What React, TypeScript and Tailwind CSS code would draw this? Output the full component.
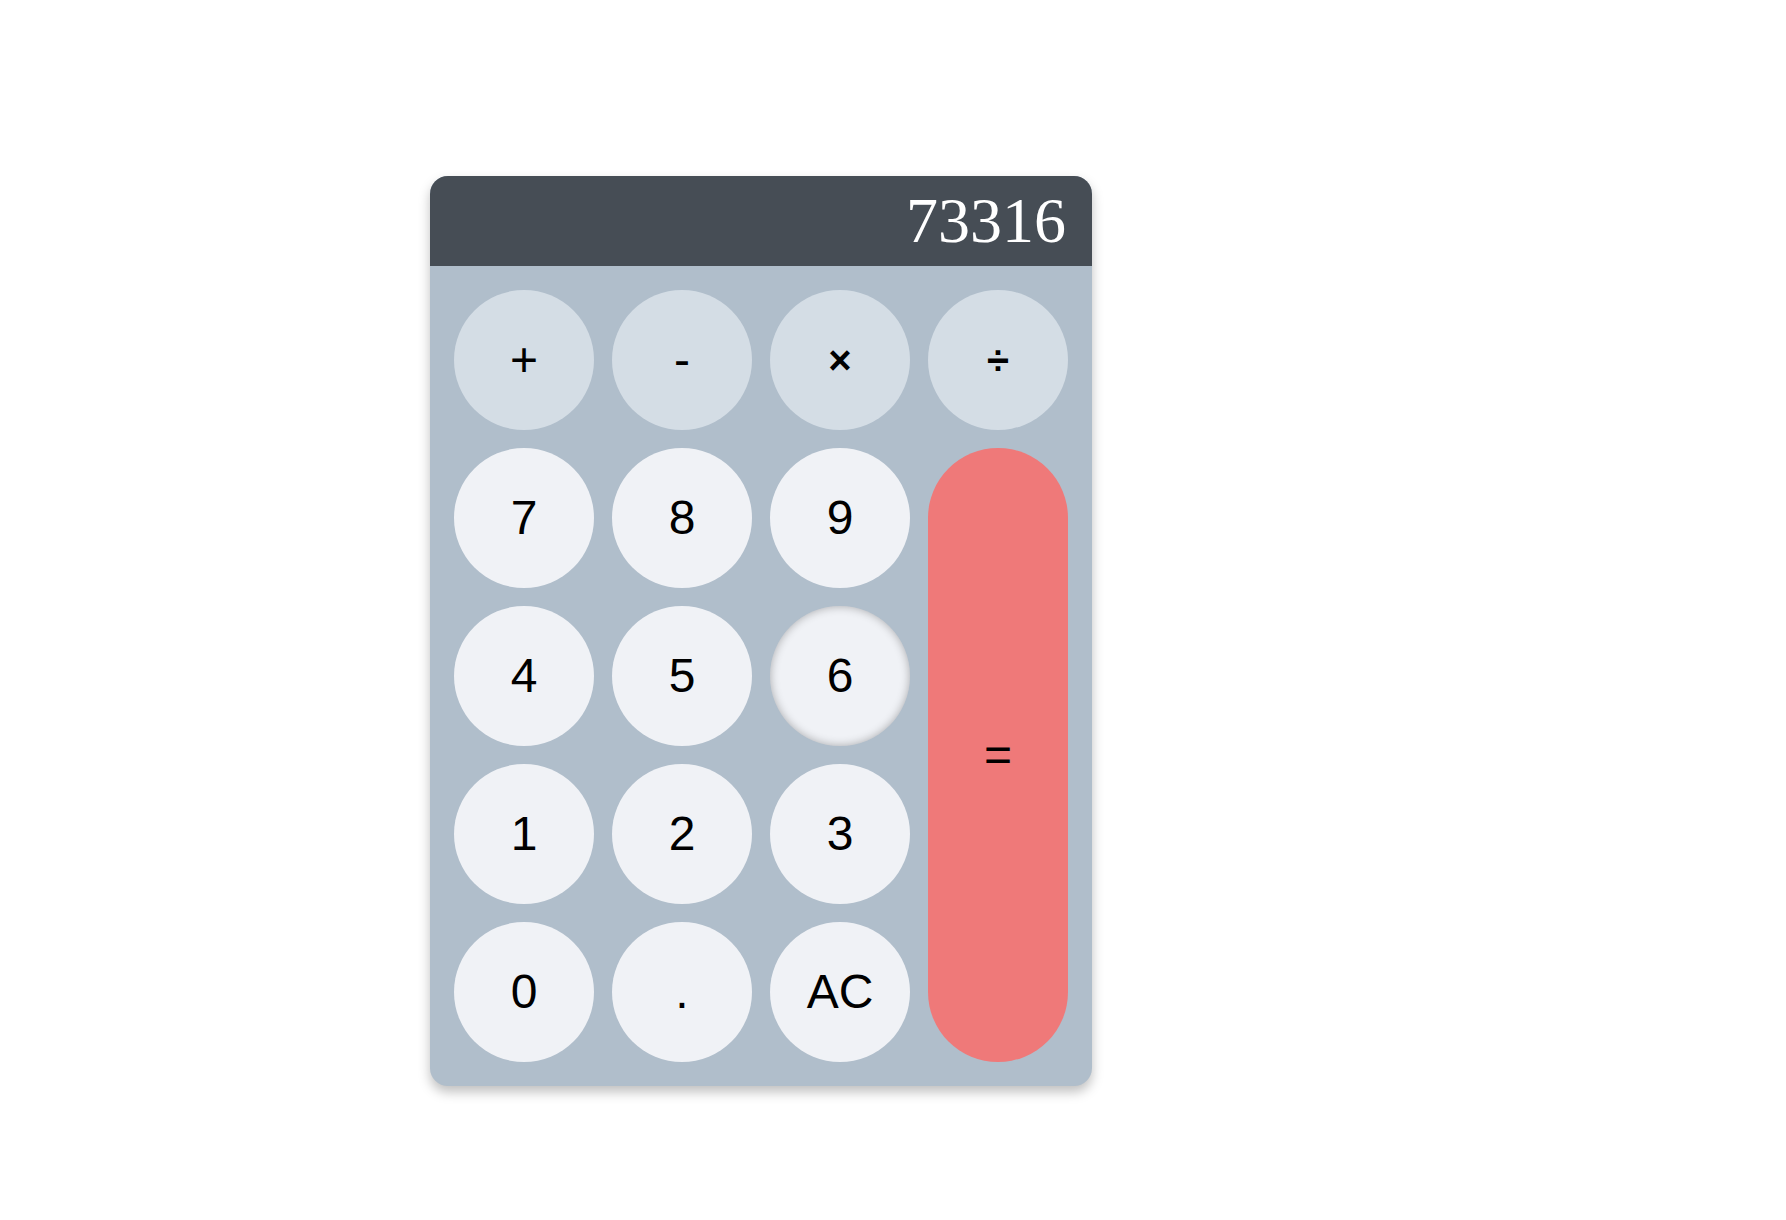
import React, { useState } from "react";

type Key = {
  label: string;
  kind: "op" | "num" | "eq";
};

const keys: Key[] = [
  { label: "+", kind: "op" },
  { label: "-", kind: "op" },
  { label: "×", kind: "op" },
  { label: "÷", kind: "op" },
  { label: "7", kind: "num" },
  { label: "8", kind: "num" },
  { label: "9", kind: "num" },
  { label: "=", kind: "eq" },
  { label: "4", kind: "num" },
  { label: "5", kind: "num" },
  { label: "6", kind: "num" },
  { label: "1", kind: "num" },
  { label: "2", kind: "num" },
  { label: "3", kind: "num" },
  { label: "0", kind: "num" },
  { label: ".", kind: "num" },
  { label: "AC", kind: "num" },
];

const App: React.FC = () => {
  const [display] = useState("73316");
  const pressed = "6";

  return (
    <div className="min-h-screen w-full bg-white pt-[176px] pl-[430px]">
      <div className="w-[662px] rounded-[18px] bg-[#b0becb] shadow-[0_6px_12px_rgba(0,0,0,0.25)] overflow-hidden">
        {/* Display */}
        <div className="h-[90px] bg-[#464d55] flex items-center justify-end pr-[26px]">
          <span
            className="text-white text-[64px] leading-none"
            style={{ fontFamily: '"Liberation Serif", "Times New Roman", serif' }}
          >
            {display}
          </span>
        </div>

        {/* Keypad */}
        <div
          className="grid grid-cols-[repeat(4,140px)] grid-rows-[repeat(5,140px)] gap-[18px] p-6"
          style={{ fontFamily: '"Liberation Sans", Arial, sans-serif' }}
        >
          {keys.map((k) => (
            <button
              key={k.label}
              className={
                "rounded-full flex items-center justify-center text-black leading-none " +
                (k.label === "×" || k.label === "÷"
                  ? "text-[40px] font-bold "
                  : "text-[48px] ") +
                (k.kind === "op"
                  ? "bg-[#d4dde5] "
                  : k.kind === "eq"
                  ? "bg-[#ef7979] row-span-4 "
                  : "bg-[#f0f2f6] ") +
                (k.label === pressed ? "shadow-[inset_0_0_10px_rgba(0,0,0,0.3)]" : "")
              }
            >
              {k.label}
            </button>
          ))}
        </div>
      </div>
    </div>
  );
};

export default App;
